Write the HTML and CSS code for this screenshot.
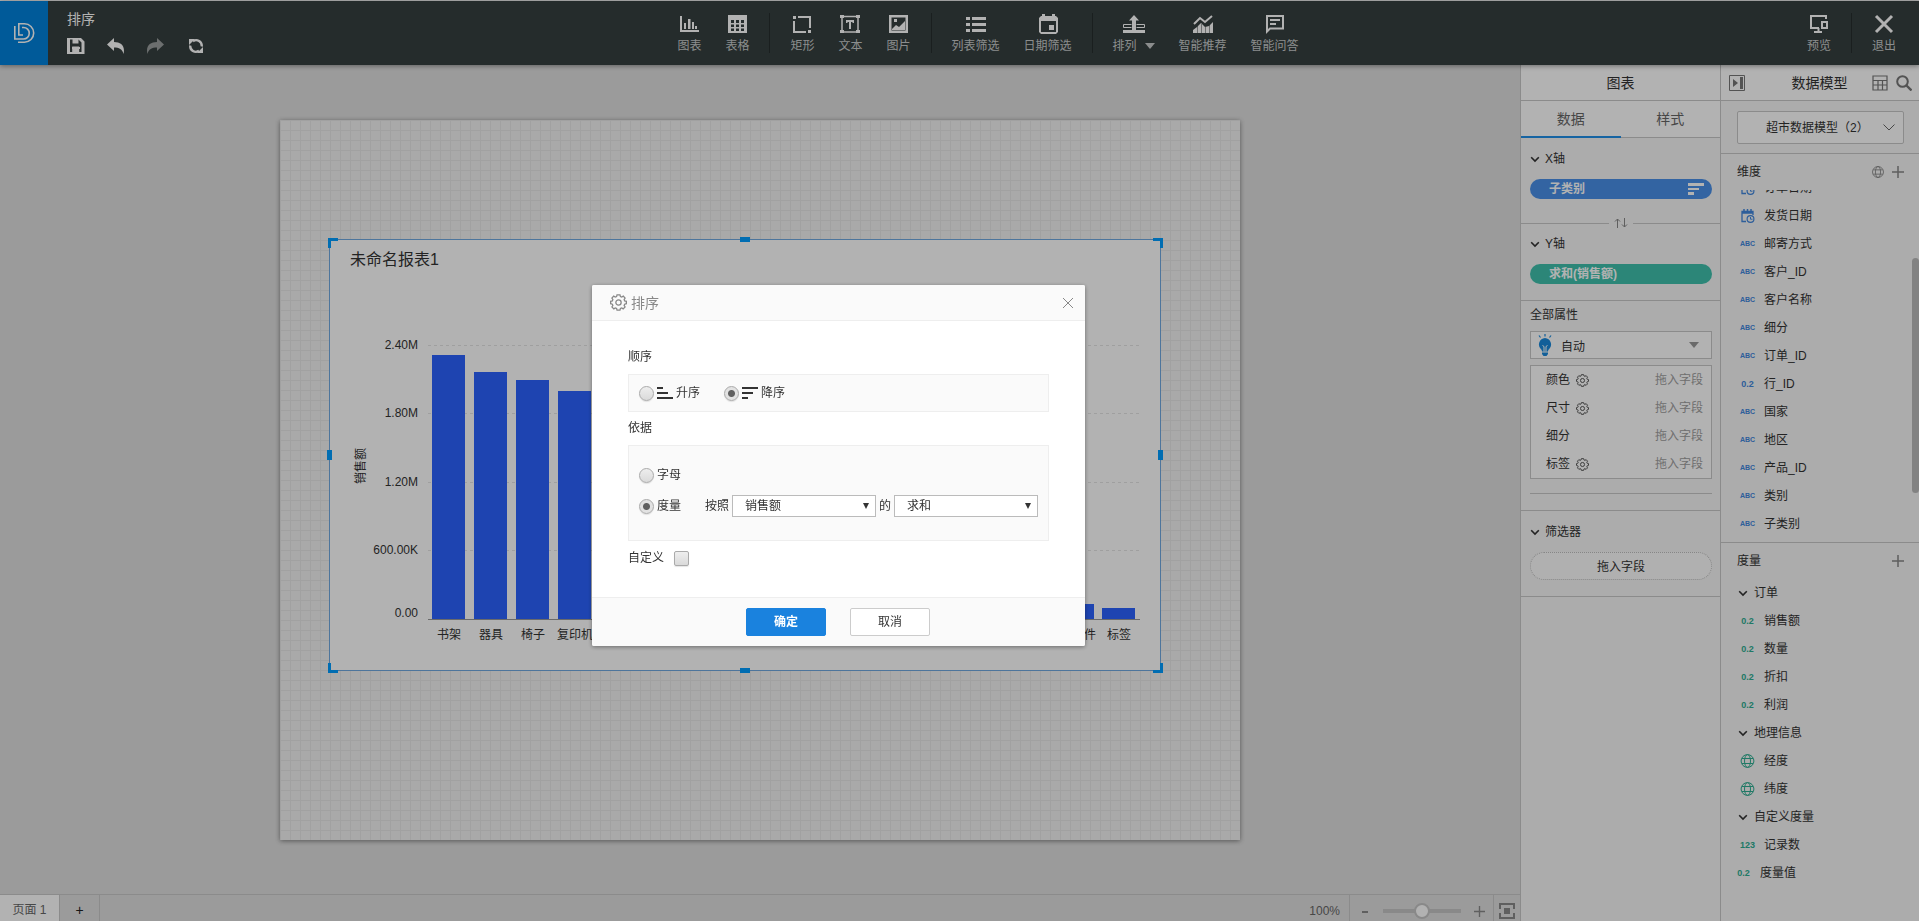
FILE: index.html
```html
<!DOCTYPE html>
<html lang="zh-CN">
<head>
    <meta charset="UTF-8">
    <meta name="viewport" content="width=device-width, initial-scale=1.0">
    <title>排序</title>
    <link rel="stylesheet" href="styles.css">
</head>
<body>
    <svg class="sprite" aria-hidden="true">
        <symbol id="i-gear" viewBox="0 0 16 16">
            <path d="M6.6 0.8h2.8l.4 1.6 1.2.5 1.5-.9 1.7 1.9-.9 1.4.5 1.2 1.6.4v2.2l-1.6.5-.5 1.2.9 1.4-1.8 1.8-1.4-.9-1.2.5-.4 1.6H6.6l-.4-1.6-1.2-.5-1.4.9-1.8-1.8.9-1.4-.5-1.2L.6 9.100V6.900l1.600-.4.5-1.200-.9-1.400 1.700-1.900 1.500.9 1.200-.5z" fill="none" stroke="currentColor" stroke-width="1.200"/>
            <circle cx="8" cy="8" r="2.500" fill="none" stroke="currentColor" stroke-width="1.200"/>
        </symbol>
        <symbol id="i-chevron" viewBox="0 0 10 10">
            <path d="M1.200 3.200L5 7l3.800-3.800" fill="none" stroke="currentColor" stroke-width="1.600"/>
        </symbol>
        <symbol id="i-globe" viewBox="0 0 14 14">
            <g fill="none" stroke="currentColor">
                <circle cx="7" cy="7" r="6.400"/>
                <ellipse cx="7" cy="7" rx="3" ry="6.400"/>
                <path d="M1.500 4.500h11M1.500 9.500h11"/>
            </g>
        </symbol>
        <symbol id="i-plus" viewBox="0 0 12 12">
            <path d="M6 0v12M0 6h12" stroke="currentColor" stroke-width="1.500"/>
        </symbol>
        <symbol id="i-date" viewBox="0 0 14 14">
            <g fill="none" stroke="currentColor">
                <path d="M5.500 12.500h-4v-10h11V6M1 4h12" stroke-width="1.300"/>
                <path d="M3.500 0v4M7 0v4M10.500 0v4" stroke-width="1.500"/>
                <circle cx="10" cy="10" r="3.400" stroke-width="1.200"/>
                <path d="M10 8v2.200h2"/>
            </g>
        </symbol>
    </svg>

    <header class="header">
        <div class="logo">
            <svg width="22" height="22" viewBox="0 0 22 22" fill="none" stroke="#fff" stroke-width="1.600">
                <path d="M1.800 4v13h8.700a5.500 5.500 0 0 0 0-11.500H9"/>
                <path d="M5 20.200h6.500a9.100 9.100 0 0 0 0-18.400H5.800V13H10"/>
            </svg>
        </div>
        <div class="header-left">
            <h1 class="doc-title">排序</h1>
            <div class="quick">
                <button class="icon-btn" aria-label="保存">
                    <svg width="18" height="16" viewBox="0 0 18 16"><path d="M0 0h14l3.500 3.500V16H0zM3 1.500v12.500h2.200V8.500h7V14h2.300V4.500l-3-3v4H5.500v-4z" fill="#fff" fill-rule="evenodd"/><path d="M8.500 1.500h2v3h-2zM5 9h8v2H5z" fill="#fff"/></svg>
                </button>
                <button class="icon-btn" aria-label="撤销">
                    <svg width="18" height="16" viewBox="0 0 18 16"><path d="M0 6.500L7 0v4c7 0 11.500 4 9.500 12C15.500 11 12 9.500 7 9.500V13z" fill="#fff"/></svg>
                </button>
                <button class="icon-btn disabled" aria-label="重做">
                    <svg width="18" height="16" viewBox="0 0 18 16"><path d="M17 6.500L10 0v4C3 4-1.500 8 .5 16 1.500 11 5 9.500 10 9.500V13z" fill="#fff"/></svg>
                </button>
                <button class="icon-btn" aria-label="刷新">
                    <svg width="18" height="16" viewBox="0 0 18 16"><g fill="none" stroke="#fff" stroke-width="2.400"><path d="M6 3.200a5.600 5.600 0 0 1 8.700 5.300"/><path d="M12 12.800a5.600 5.600 0 0 1-8.700-5.300"/></g><path d="M2 1h6L2 7zM16 15h-6l6-6z" fill="#fff"/></svg>
                </button>
            </div>
        </div>

        <nav class="toolbar">
            <button class="tool">
                <svg width="20" height="20" viewBox="0 0 20 20" fill="#fff"><path d="M1 2h2v14h17v2H1zM5 9h2v6H5zM9 5h2.500v10H9zM13 8h2v7h-2zM16 12h2v3h-2z"/></svg>
                <span>图表</span>
            </button>
            <button class="tool">
                <svg width="20" height="20" viewBox="0 0 20 20"><path fill-rule="evenodd" fill="#fff" d="M1 1h19v18H1zM4 6v3h3V6zM9 6v3h3V6zM14 6v3h3V6zM4 10.500v2.500h3v-2.500zM9 10.500v2.500h3v-2.500zM14 10.500v2.500h3v-2.500zM4 14.500V17h3v-2.500zM9 14.500V17h3v-2.500zM14 14.500V17h3v-2.500z"/></svg>
                <span>表格</span>
            </button>
            <i class="sep"></i>
            <button class="tool">
                <svg width="20" height="20" viewBox="0 0 20 20"><path d="M6 3h12v11M14 18H2V7" fill="none" stroke="#fff" stroke-width="2"/><path d="M1 2h3v3H1zM16 16h3v3h-3z" fill="#fff"/></svg>
                <span>矩形</span>
            </button>
            <button class="tool">
                <svg width="20" height="20" viewBox="0 0 20 20"><path d="M2 2.500h16v15.500H2z" fill="none" stroke="#fff" stroke-width="1.500"/><path d="M0 1h4v3H0zM16 1h4v3h-4zM0 16h4v3H0zM16 16h4v3h-4zM6 6h8v3h-1.500V8H11v7H9V8H7.500v1H6z" fill="#fff"/></svg>
                <span>文本</span>
            </button>
            <button class="tool">
                <svg width="20" height="20" viewBox="0 0 20 20"><path fill-rule="evenodd" fill="#fff" d="M1 1h19v18H1zM3.500 3.500v13h14v-13z"/><path d="M4 15l4-4 3 2 6-6v9H4zM6 5h3v3H6z" fill="#fff"/></svg>
                <span>图片</span>
            </button>
            <i class="sep"></i>
            <button class="tool">
                <svg width="20" height="20" viewBox="0 0 20 20" fill="#fff"><path d="M0 3h4v3H0zM6 3h14v3H6zM0 9h4v3H0zM6 9h14v3H6zM0 15h4v3H0zM6 15h14v3H6z"/></svg>
                <span>列表筛选</span>
            </button>
            <button class="tool">
                <svg width="20" height="20" viewBox="0 0 20 20"><path fill-rule="evenodd" fill="#fff" d="M3 2h1V0h3v2h7V0h3v2h1l2 2v14l-2 2H3l-2-2V4zM3 7v11h15V7zM11 11h5v5h-5z"/></svg>
                <span>日期筛选</span>
            </button>
            <i class="sep"></i>
            <button class="tool">
                <svg width="22" height="20" viewBox="0 0 22 20" fill="#fff"><path d="M11 1l5 5.500h-3V16h9v3H0v-3h9V6.500H6z"/><path d="M8.500 10.500h-8v3h8M13.500 10.500h8v3h-8" fill="none" stroke="#fff"/></svg>
                <span>排列 <i class="caret"></i></span>
            </button>
            <button class="tool">
                <svg width="20" height="20" viewBox="0 0 20 20"><path d="M1 10l6-6 5 4 7-6" fill="none" stroke="#fff" stroke-width="2"/><path d="M0 19v-3l4-3 4-4 4 4 4-1 4-4v11z" fill="#fff"/><path d="M4.500 12v7M8.500 10v9M12.500 13v6M16.500 11v8" stroke="#363f3f" stroke-width=".5"/></svg>
                <span>智能推荐</span>
            </button>
            <button class="tool">
                <svg width="20" height="20" viewBox="0 0 20 20"><path d="M2 17.500V2h16v12.500H5z" fill="none" stroke="#fff" stroke-width="2"/><path d="M5 5h10v2H5zM5 9h6v2H5z" fill="#fff"/></svg>
                <span>智能问答</span>
            </button>
        </nav>

        <div class="header-right">
            <button class="tool wide">
                <svg width="20" height="20" viewBox="0 0 20 20"><path d="M17 5V2H2v12h8M5 18h8M9.500 14v4" fill="none" stroke="#fff" stroke-width="2"/><path d="M13 8h5v6h-5z" fill="none" stroke="#fff" stroke-width="2"/></svg>
                <span>预览</span>
            </button>
            <i class="sep"></i>
            <button class="tool wide">
                <svg width="20" height="20" viewBox="0 0 20 20"><path d="M2 2l16 16M18 2L2 18" stroke="#fff" stroke-width="3"/></svg>
                <span>退出</span>
            </button>
        </div>
    </header>

    <div class="workspace">
        <main class="main">
            <div class="stage">
                <div class="canvas">
                    <section class="widget">
                        <h2 class="widget-title">未命名报表1</h2>
                        <svg class="chart" id="chart" viewBox="0 0 830 400" role="img" aria-label="销售额"></svg>
                        <i class="corner tl"></i><i class="corner tr"></i>
                        <i class="corner bl"></i><i class="corner br"></i>
                        <i class="handle top"></i><i class="handle bottom"></i>
                        <i class="handle left"></i><i class="handle right"></i>
                    </section>
                </div>
            </div>
            <footer class="pagebar">
                <button class="page-tab">页面 1</button>
                <button class="page-add" aria-label="添加页面">+</button>
                <span class="zoom-value">100%</span>
                <div class="zoom">
                    <button class="zoom-btn" aria-label="缩小"><svg width="10" height="12"><path d="M2 7h6" stroke="currentColor" stroke-width="2"/></svg></button>
                    <input class="zoom-range" type="range" min="0" max="200" value="100" aria-label="缩放">
                    <button class="zoom-btn" aria-label="放大"><svg width="11" height="11"><use href="#i-plus"/></svg></button>
                </div>
                <button class="fit" aria-label="适应屏幕">
                    <svg width="16" height="16" viewBox="0 0 16 16"><path d="M1 6V1h5M10 1h5v5M15 10v5h-5M6 15H1v-5" fill="none" stroke="currentColor" stroke-width="2"/><path d="M5 5h6v6H5z" fill="currentColor"/><path d="M6 1h4M6 15h4" stroke="currentColor" stroke-width="2"/></svg>
                </button>
            </footer>
        </main>

        <aside class="panel chart-panel">
            <h2 class="panel-title">图表</h2>
            <div class="tabs">
                <button class="tab active">数据</button>
                <button class="tab">样式</button>
            </div>
            <section class="axis">
                <h3 class="fold"><svg width="10" height="10"><use href="#i-chevron"/></svg>X轴</h3>
                <div class="pill blue">子类别
                    <svg width="16" height="12" viewBox="0 0 16 12"><path d="M0 0h16v3H0zM0 5h11v2H0zM0 9h6v3H0z" fill="#fff"/></svg>
                </div>
            </section>
            <div class="swap"><svg width="14" height="10" viewBox="0 0 14 10" fill="none" stroke="currentColor"><path d="M3.500 10V1M1 3.500L3.500 1 6 3.500M10.500 0v9M8 6.500L10.500 9 13 6.500"/></svg></div>
            <section class="axis y-axis">
                <h3 class="fold"><svg width="10" height="10"><use href="#i-chevron"/></svg>Y轴</h3>
                <div class="pill green">求和(销售额)</div>
            </section>
            <section class="attrs">
                <h3 class="attrs-title">全部属性</h3>
                <div class="select-box attr-select">
                    <svg class="bulb" width="14" height="22" viewBox="0 0 14 22"><path d="M7 4a6.500 6.500 0 0 1 4 11.200c-.8.800-1 1.500-1 2.300H4c0-.8-.2-1.500-1-2.300A6.500 6.500 0 0 1 7 4zM4 18.500h6v1.500L8.500 22h-3L4 20z" fill="#1989dc"/><path d="M7 0v2.500M1 1.500l1.500 2M13 1.500l-1.500 2" stroke="#1989dc" stroke-width="1.200"/><path d="M4.500 11.500l1.500 1v5M9.500 11.500l-1.500 1v5" stroke="#fff" fill="none"/></svg>
                    <select aria-label="图表类型"><option>自动</option></select>
                    <i class="caret"></i>
                </div>
                <ul class="attr-list">
                    <li><span>颜色</span><svg width="13" height="13"><use href="#i-gear"/></svg><em>拖入字段</em></li>
                    <li><span>尺寸</span><svg width="13" height="13"><use href="#i-gear"/></svg><em>拖入字段</em></li>
                    <li><span>细分</span><em>拖入字段</em></li>
                    <li><span>标签</span><svg width="13" height="13"><use href="#i-gear"/></svg><em>拖入字段</em></li>
                </ul>
                <hr class="line">
            </section>
            <section class="axis filters">
                <h3 class="fold"><svg width="10" height="10"><use href="#i-chevron"/></svg>筛选器</h3>
                <div class="drop">拖入字段</div>
            </section>
        </aside>

        <aside class="panel model-panel">
            <div class="panel-title model-title">
                <button class="icon-btn" aria-label="收起"><svg width="16" height="16" viewBox="0 0 16 16"><path d="M.5.500h15v15H.5z" fill="none" stroke="currentColor"/><path d="M4 4l5 4-5 4zM11 2h3v12h-3z" fill="currentColor"/></svg></button>
                <h2>数据模型</h2>
                <button class="icon-btn" aria-label="表格"><svg width="16" height="16" viewBox="0 0 16 16"><path d="M1 1h14v14H1zM1 5.500h14M1 10h14M6 5.500V15M10.500 5.500V15" fill="none" stroke="currentColor" stroke-width="1.200"/></svg></button>
                <button class="icon-btn" aria-label="搜索"><svg width="16" height="16" viewBox="0 0 16 16"><circle cx="6.500" cy="6.500" r="5.300" fill="none" stroke="currentColor" stroke-width="2"/><path d="M10.500 10.500l5 5" stroke="currentColor" stroke-width="2.400"/></svg></button>
            </div>
            <div class="model-pick">
                <div class="select-box model-select">
                    <select aria-label="数据模型"><option>超市数据模型（2）</option></select>
                    <svg width="12" height="7" viewBox="0 0 12 7"><path d="M.5.500L6 6l5.500-5.500" fill="none" stroke="#666"/></svg>
                </div>
            </div>
            <section class="dims">
                <div class="group-title"><h3>维度</h3>
                    <button class="icon-btn" aria-label="地图"><svg width="12" height="12"><use href="#i-globe"/></svg></button>
                    <button class="icon-btn" aria-label="添加维度"><svg width="12" height="12"><use href="#i-plus"/></svg></button>
                </div>
                <ul class="fields dim-fields">
                    <li><svg class="type" width="14" height="14"><use href="#i-date"/></svg>订单日期</li>
                    <li><svg class="type" width="14" height="14"><use href="#i-date"/></svg>发货日期</li>
                    <li><b class="type abc">ABC</b>邮寄方式</li>
                    <li><b class="type abc">ABC</b>客户_ID</li>
                    <li><b class="type abc">ABC</b>客户名称</li>
                    <li><b class="type abc">ABC</b>细分</li>
                    <li><b class="type abc">ABC</b>订单_ID</li>
                    <li><b class="type">0.2</b>行_ID</li>
                    <li><b class="type abc">ABC</b>国家</li>
                    <li><b class="type abc">ABC</b>地区</li>
                    <li><b class="type abc">ABC</b>产品_ID</li>
                    <li><b class="type abc">ABC</b>类别</li>
                    <li><b class="type abc">ABC</b>子类别</li>
                </ul>
                <i class="scroll-thumb"></i>
            </section>
            <section class="measures">
                <div class="group-title"><h3>度量</h3>
                    <button class="icon-btn" aria-label="添加度量"><svg width="12" height="12"><use href="#i-plus"/></svg></button>
                </div>
                <ul class="fields">
                    <li class="folder"><svg width="10" height="10"><use href="#i-chevron"/></svg>订单</li>
                    <li><b class="type">0.2</b>销售额</li>
                    <li><b class="type">0.2</b>数量</li>
                    <li><b class="type">0.2</b>折扣</li>
                    <li><b class="type">0.2</b>利润</li>
                    <li class="folder"><svg width="10" height="10"><use href="#i-chevron"/></svg>地理信息</li>
                    <li><svg class="type" width="14" height="14"><use href="#i-globe"/></svg>经度</li>
                    <li><svg class="type" width="14" height="14"><use href="#i-globe"/></svg>纬度</li>
                    <li class="folder"><svg width="10" height="10"><use href="#i-chevron"/></svg>自定义度量</li>
                    <li><b class="type">123</b>记录数</li>
                    <li class="root"><b class="type">0.2</b>度量值</li>
                </ul>
            </section>
        </aside>
    </div>

    <div class="overlay">
        <form class="modal" role="dialog" aria-labelledby="modal-title">
            <div class="modal-head">
                <svg width="17" height="17"><use href="#i-gear"/></svg>
                <h2 id="modal-title">排序</h2>
                <button type="button" class="icon-btn" aria-label="关闭"><svg width="12" height="12"><path d="M1 1l10 10M11 1L1 11" stroke="currentColor"/></svg></button>
            </div>
            <div class="modal-body">
                <h3 class="label">顺序</h3>
                <div class="box row">
                    <label class="choice asc"><input type="radio" name="order">
                        <svg width="16" height="12" viewBox="0 0 16 12"><path d="M0 0h6v2H0zM0 5h11v2H0zM0 10h16v2H0z" fill="#333"/></svg>升序</label>
                    <label class="choice"><input type="radio" name="order" checked>
                        <svg width="16" height="12" viewBox="0 0 16 12"><path d="M0 0h16v2H0zM0 5h11v2H0zM0 10h6v2H0z" fill="#333"/></svg>降序</label>
                </div>
                <h3 class="label">依据</h3>
                <div class="box by">
                    <div class="row alpha"><label class="choice"><input type="radio" name="by">字母</label></div>
                    <div class="row">
                        <label class="choice measure"><input type="radio" name="by" checked>度量</label>
                        <label for="field">按照</label>
                        <span class="drop-down"><select id="field"><option>销售额</option></select></span>
                        <label for="agg">的</label>
                        <span class="drop-down"><select id="agg"><option>求和</option></select></span>
                    </div>
                </div>
                <label class="custom">自定义<input type="checkbox"></label>
            </div>
            <div class="modal-foot">
                <button type="button" class="btn primary">确定</button>
                <button type="button" class="btn">取消</button>
            </div>
        </form>
    </div>

    <script>
        const names = ['书架', '器具', '椅子', '复印机', '电话', '桌子', '配件', '收纳具', '用具', '设备', '装订机', '美术', '纸张', '信封', '用品', '系固件', '标签'];
        const heights = [264, 247, 239, 228, 190, 172, 160, 148, 120, 108, 84, 70, 60, 44, 30, 15, 11];
        const ticks = [['2.40M', 74], ['1.80M', 142], ['1.20M', 211], ['600.00K', 279]];
        const base = 348;

        function drawChart() {
            let out = '';
            ticks.forEach(([text, y]) => {
                out += `<line class="grid" x1="98" x2="810" y1="${y}.5" y2="${y}.5"/>`;
                out += `<text class="tick" x="88" y="${y + 4}">${text}</text>`;
            });
            out += `<text class="tick" x="88" y="${base - 2}">0.00</text>`;
            names.forEach((name, i) => {
                const x = Math.round(102 + i * 41.9);
                out += `<rect class="bar" x="${x}" y="${base - heights[i]}" width="33" height="${heights[i]}"/>`;
                out += `<text class="name" x="${x + 17}" y="${base + 20}">${name}</text>`;
            });
            out += `<line class="base" x1="98" x2="810" y1="${base}.5" y2="${base}.5"/>`;
            out += `<text class="name" transform="translate(35 195) rotate(-90)">销售额</text>`;
            document.getElementById('chart').innerHTML = out;
        }

        drawChart();
    </script>
</body>
</html>
```
FILE: styles.css
```css
* {
    box-sizing: border-box;
}

body {
    margin: 0;
    padding-top: 1px;
    height: 100vh;
    display: flex;
    flex-direction: column;
    overflow: hidden;
    background: #fff;
    color: #333;
    font: 12px/16px "Liberation Sans", "Noto Sans CJK SC", sans-serif;
}

h1, h2, h3, ul {
    margin: 0;
    padding: 0;
    font-weight: normal;
    font-size: 12px;
}

ul {
    list-style: none;
}

i, em {
    font-style: normal;
}

button, select, input {
    font: inherit;
    color: inherit;
    margin: 0;
}

button {
    border: 0;
    padding: 0;
    background: none;
    cursor: pointer;
}

select {
    appearance: none;
    border: 0;
    background: none;
    outline: none;
}

svg {
    flex: none;
    display: block;
}

.sprite {
    position: absolute;
    width: 0;
    height: 0;
}

.icon-btn {
    display: flex;
}

/* header */
.header {
    position: relative;
    z-index: 2;
    display: flex;
    flex: none;
    height: 64px;
    background: #363f3f;
    color: #c8cbcb;
    box-shadow: 0 1px 5px rgba(0, 0, 0, 0.4);
}

.logo {
    width: 48px;
    display: flex;
    align-items: center;
    justify-content: center;
    background: #0081dc;
}

.header-left {
    width: 161px;
    padding: 10px 0 0 19px;
}

.doc-title {
    font-size: 14px;
    line-height: 16px;
    color: #fff;
}

.quick {
    display: flex;
    gap: 22px;
    padding-top: 11px;
}

.disabled {
    opacity: 0.5;
}

.toolbar {
    flex: 1;
    display: flex;
    justify-content: center;
}

.tool {
    display: flex;
    flex-direction: column;
    align-items: center;
    gap: 4px;
    padding: 13px 12px 0;
}

.tool.wide {
    padding: 13px 20px 0;
}

.tool span {
    display: flex;
    align-items: center;
    gap: 8px;
    white-space: nowrap;
}

.sep {
    width: 1px;
    height: 40px;
    margin: 12px 8px;
    background: #262d2d;
}

.caret {
    border: 5px solid transparent;
    border-top: 6px solid currentColor;
    border-bottom: 0;
}

.header-right {
    width: 152px;
    padding-right: 3px;
    display: flex;
    justify-content: flex-end;
}

.header-right .sep {
    margin: 12px 0;
}

/* workspace */
.workspace {
    flex: 1;
    display: flex;
    min-height: 0;
}

.main {
    flex: 1;
    display: flex;
    flex-direction: column;
    min-width: 0;
    background: #dfdfdf;
}

.stage {
    flex: 1;
    display: flex;
    align-items: center;
    justify-content: center;
    min-height: 0;
}

.canvas {
    position: relative;
    width: 960px;
    height: 720px;
    background-color: #f3f3f3;
    background-image: linear-gradient(#e7e7e7 1px, transparent 1px), linear-gradient(90deg, #e7e7e7 1px, transparent 1px);
    background-size: 10px 10px;
    box-shadow: 0 1px 5px rgba(0, 0, 0, 0.45);
}

.widget {
    position: absolute;
    left: 49px;
    top: 119px;
    width: 832px;
    height: 432px;
    border: 1px solid #6fa8e0;
    background: #fff;
}

.widget-title {
    padding: 9px 20px 0;
    font-size: 16px;
    line-height: 22px;
}

.chart {
    display: block;
    width: 100%;
}

.bar {
    fill: #2b62fe;
}

.grid {
    stroke: #e4e4e4;
    stroke-dasharray: 3 3;
}

.base {
    stroke: #999;
}

.tick {
    text-anchor: end;
}

.name {
    text-anchor: middle;
}

.tick, .name {
    fill: #333;
}

.corner, .handle {
    position: absolute;
}

.corner {
    width: 10px;
    height: 10px;
    border: 0 solid #009dff;
}

.tl { left: -2px; top: -2px; border-width: 3px 0 0 3px; }
.tr { right: -3px; top: -2px; border-width: 3px 3px 0 0; }
.bl { left: -2px; bottom: -3px; border-width: 0 0 3px 3px; }
.br { right: -3px; bottom: -3px; border-width: 0 3px 3px 0; }

.handle {
    background: #009dff;
}

.handle.top, .handle.bottom {
    left: calc(50% - 5px);
    width: 10px;
    height: 5px;
}

.handle.left, .handle.right {
    top: calc(50% - 5px);
    width: 5px;
    height: 10px;
}

.handle.top { top: -3px; }
.handle.bottom { bottom: -3px; }
.handle.left { left: -3px; }
.handle.right { right: -3px; }

/* page bar */
.pagebar {
    display: flex;
    flex: none;
    height: 27px;
    border-top: 1px solid #c8c8c8;
    color: #666;
}

.page-tab {
    width: 60px;
    padding-top: 4px;
    background: #fff;
    border-right: 1px solid #c8c8c8;
}

.page-add {
    width: 40px;
    padding-top: 4px;
    border-right: 1px solid #c8c8c8;
    font-size: 14px;
    color: #222;
}

.zoom-value {
    margin-left: auto;
    padding: 8px 9px 0 0;
}

.zoom {
    display: flex;
    align-items: center;
    gap: 13px;
    padding: 6px 8px 0 10px;
    border: solid #c8c8c8;
    border-width: 0 1px;
    color: #888;
}

.zoom-btn {
    display: flex;
}

.zoom-range {
    appearance: none;
    width: 78px;
    height: 16px;
    background: linear-gradient(#c4c4c4, #c4c4c4) center / 100% 4px no-repeat;
}

.zoom-range::-webkit-slider-thumb {
    appearance: none;
    width: 16px;
    height: 16px;
    border: 2px solid #c4c4c4;
    border-radius: 50%;
    background: #fff;
}

.fit {
    width: 26px;
    padding: 6px 0 0 5px;
    color: #888;
}

/* side panels */
.panel {
    flex: none;
    border-left: 1px solid #c8c8c8;
    background: #f6f6f6;
}

.chart-panel {
    width: 200px;
}

.model-panel {
    width: 199px;
    display: flex;
    flex-direction: column;
}

.panel-title {
    height: 36px;
    border-bottom: 1px solid #c8c8c8;
    background: #fff;
    font-size: 14px;
    line-height: 36px;
    text-align: center;
}

.tabs {
    display: flex;
    background: #fff;
    border-bottom: 1px solid #c8c8c8;
}

.tab {
    flex: 1;
    height: 36px;
    font-size: 14px;
    color: #666;
}

.tab.active {
    box-shadow: 0 1px #2090e8, inset 0 -1px #2090e8;
}

.axis {
    padding: 11px 8px 0 9px;
}

.fold {
    display: flex;
    align-items: center;
    gap: 5px;
    height: 20px;
}

.pill {
    display: flex;
    align-items: center;
    justify-content: space-between;
    height: 20px;
    margin-top: 10px;
    padding: 0 8px 0 19px;
    border-radius: 10px;
    color: #fff;
    font-weight: bold;
}

.pill.blue {
    background: #4990e9;
}

.pill.green {
    background: #3fc1ad;
}

.swap {
    display: flex;
    align-items: center;
    gap: 5px;
    margin-top: 19px;
    color: #888;
}

.swap::before, .swap::after {
    content: "";
    flex: 1;
    height: 1px;
    background: #c8c8c8;
}

.y-axis {
    padding-top: 6px;
    padding-bottom: 16px;
    border-bottom: 1px solid #c8c8c8;
}

.attrs {
    padding: 6px 8px 16px 9px;
    border-bottom: 1px solid #c8c8c8;
}

.attrs-title {
    line-height: 16px;
    margin-bottom: 8px;
}

.select-box {
    position: relative;
    display: flex;
    align-items: center;
    border: 1px solid #c8c8c8;
    background: #fff;
}

.select-box select {
    flex: 1;
    height: 100%;
}

.attr-select {
    height: 28px;
    padding: 0 12px 0 7px;
    color: #333;
}

.attr-select select {
    padding-left: 9px;
    padding-top: 3px;
}

.attr-select .caret {
    color: #999;
}

.attr-list {
    margin-top: 6px;
    border: 1px solid #c8c8c8;
    background: #fff;
}

.attr-list li {
    display: flex;
    align-items: center;
    gap: 6px;
    height: 28px;
    padding: 0 8px 0 15px;
}

.attr-list svg {
    color: #555;
}

.attr-list em {
    margin-left: auto;
    color: #a0a0a0;
}

.line {
    margin: 14px 0 0;
    border: 0;
    border-top: 1px solid #c8c8c8;
}

.filters {
    padding-bottom: 16px;
    border-bottom: 1px solid #c8c8c8;
}

.drop {
    height: 28px;
    margin-top: 10px;
    border: 1px dotted #c0c0c0;
    border-radius: 14px;
    background: #fcfcfc;
    line-height: 28px;
    text-align: center;
}

/* model panel */
.model-title {
    display: flex;
    align-items: center;
    gap: 8px;
    padding: 0 7px 0 8px;
    color: #777;
}

.model-title h2 {
    flex: 1;
    padding-left: 22px;
    font-size: 14px;
    color: #333;
}

.model-pick {
    padding: 10px 15px 9px 16px;
    border-bottom: 1px solid #c8c8c8;
}

.model-select {
    height: 33px;
    padding-right: 8px;
    border-radius: 2px;
}

.model-select select {
    padding-left: 28px;
}

.group-title {
    display: flex;
    align-items: center;
    gap: 8px;
    height: 36px;
    padding: 0 15px 0 16px;
    color: #888;
}

.group-title h3 {
    flex: 1;
    color: #333;
}

.dims {
    position: relative;
    height: 389px;
    border-bottom: 1px solid #c8c8c8;
}

.dim-fields {
    display: flex;
    flex-direction: column;
    justify-content: flex-end;
    height: 348px;
    overflow: hidden;
}

.fields li {
    display: flex;
    flex: none;
    align-items: center;
    gap: 9px;
    height: 28px;
    padding-left: 19px;
}

.fields .type {
    width: 15px;
    color: #4287dd;
    font-size: 9px;
    text-align: center;
}

.fields .abc {
    font-family: "Liberation Sans Narrow", "Liberation Sans", sans-serif;
    font-size: 7px;
}

.measures .type {
    color: #2fae92;
}

.fields .folder {
    gap: 6px;
    padding-left: 17px;
}

.fields .root {
    padding-left: 15px;
}

.scroll-thumb {
    position: absolute;
    right: 0;
    top: 104px;
    width: 7px;
    height: 235px;
    border-radius: 4px;
    background: #bbb;
}

/* sort dialog */
.overlay {
    position: fixed;
    inset: 0;
    z-index: 10;
    background: rgba(0, 0, 0, 0.3);
}

.modal {
    position: absolute;
    left: 592px;
    top: 285px;
    width: 493px;
    border-radius: 2px;
    background: #fff;
    box-shadow: 0 1px 4px rgba(0, 0, 0, 0.4);
}

.modal-head {
    display: flex;
    align-items: center;
    gap: 4px;
    height: 36px;
    padding: 0 11px 0 18px;
    border-bottom: 1px solid #eee;
    border-radius: 2px 2px 0 0;
    background: #fafafa;
    color: #888;
}

.modal-head h2 {
    flex: 1;
    font-size: 14px;
}

.modal-body {
    padding: 18px 36px 31px;
}

.label {
    padding: 8px 0 9px;
}

.modal .label:first-child {
    padding-top: 10px;
}

.box {
    border: 1px solid #eee;
    background: #fafafa;
}

.by {
    padding: 18px 10px 23px;
}

.row {
    display: flex;
    align-items: center;
    gap: 3px;
    height: 22px;
}

.box.row {
    height: 38px;
    padding: 0 10px;
}

.choice {
    display: flex;
    align-items: center;
    gap: 3px;
}

.asc {
    margin-right: 21px;
}

.measure {
    margin-right: 21px;
}

.alpha {
    margin-bottom: 9px;
}

.modal input {
    appearance: none;
    width: 15px;
    height: 15px;
    border: 1px solid #aaa;
    background: linear-gradient(#eee, #dadada);
    box-shadow: 0 1px 1px rgba(0, 0, 0, 0.1);
}

.modal input[type="radio"] {
    border-radius: 50%;
}

.modal input[type="radio"]:checked {
    background: radial-gradient(circle, #606060 3px, #e2e2e2 4px);
}

.modal input[type="checkbox"] {
    border-radius: 2px;
}

.drop-down {
    position: relative;
    width: 144px;
    height: 22px;
    border: 1px solid #bbb;
    background: #fff;
}

.drop-down select {
    width: 100%;
    height: 20px;
    padding-left: 12px;
}

.drop-down::after {
    content: "";
    position: absolute;
    right: 6px;
    top: 7px;
    border: 3px solid transparent;
    border-top: 6px solid #333;
    border-bottom: 0;
    pointer-events: none;
}

.custom {
    display: flex;
    align-items: center;
    gap: 10px;
    margin-top: 9px;
}

.modal-foot {
    display: flex;
    justify-content: center;
    gap: 24px;
    padding: 10px 1px 10px 0;
    border-top: 1px solid #eee;
    border-radius: 0 0 2px 2px;
    background: #fafafa;
}

.btn {
    width: 80px;
    height: 28px;
    border: 1px solid #ccc;
    border-radius: 2px;
    background: #fff;
}

.btn.primary {
    border-color: #1a82de;
    background: #1a82de;
    color: #fff;
    font-weight: bold;
}
```
